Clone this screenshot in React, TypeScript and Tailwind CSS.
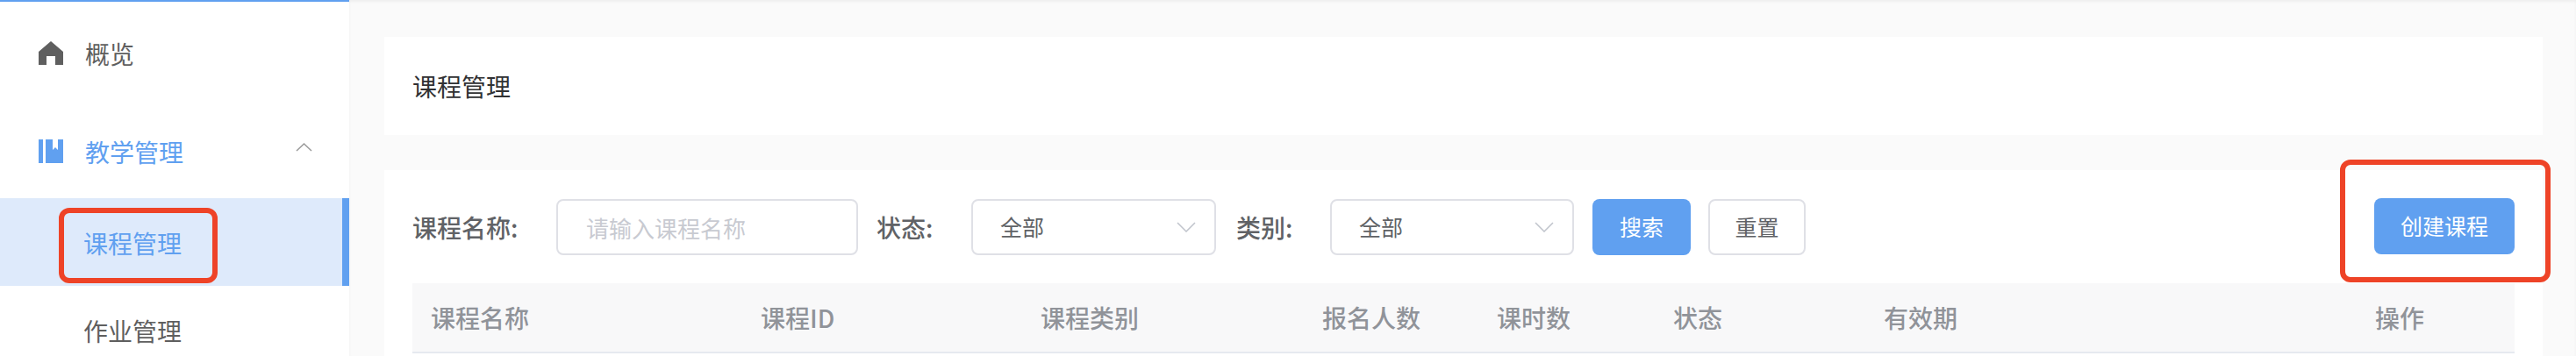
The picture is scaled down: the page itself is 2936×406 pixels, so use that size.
const font = { fontFamily: '"Noto Sans CJK SC", "Noto Sans", sans-serif' };

const columns = [
  ['课程名称', 'w-[376px]'],
  ['课程ID', 'w-[319px]'],
  ['课程类别', 'w-[321px]'],
  ['报名人数', 'w-[199px]'],
  ['课时数', 'w-[201px]'],
  ['状态', 'w-[240px]'],
  ['有效期', 'w-[560px]'],
  ['操作', 'flex-1'],
];

function HomeIcon() {
  return (
    <svg width="28" height="28" viewBox="0 0 28 28" className="shrink-0">
      <path d="M14 0 L28 12 V27 H19 V17 H9 V27 H0 V12 Z" fill="#5f5f5f" />
    </svg>
  );
}

function BookIcon() {
  return (
    <svg width="28" height="28" viewBox="0 0 28 28" className="shrink-0">
      <path d="M0 0 H5 V27 H0 Z M8 0 H16 V12 L19 9 L22 12 V0 H28 V27 H8 Z" fill="#60a0f0" />
    </svg>
  );
}

function Select({ className }: { className: string }) {
  return (
    <div className={`flex h-16 items-center justify-between rounded-lg border-2 border-[#dfe0e6] bg-white pl-[31px] pr-[21px] text-[25px] text-[#606266] ${className}`}>
      <span>全部</span>
      <svg width="22" height="12" viewBox="0 0 22 12" fill="none" stroke="#c0c4cc" strokeWidth="1.5">
        <path d="M1 1 L11 11 L21 1" />
      </svg>
    </div>
  );
}

export default function App() {
  return (
    <div style={font} className="flex h-[406px] w-[2936px] overflow-hidden bg-[#fafafa]">
      <aside className="relative w-[398px] shrink-0 border-t-2 border-[#60a0f0] bg-white text-[28px] text-[#5f5f5f]">
        <div className="flex h-[118px] items-center gap-[25px] pl-11">
          <HomeIcon />
          <span>概览</span>
        </div>
        <div className="flex h-[106px] items-center gap-[25px] pl-11 pr-[42px] text-[#60a0f0]">
          <BookIcon />
          <span>教学管理</span>
          <svg width="19" height="10" viewBox="0 0 19 10" fill="none" stroke="#9a9a9a" strokeWidth="1.5" className="ml-auto -mt-[11px]">
            <path d="M1 9 L9.5 1 L18 9" />
          </svg>
        </div>
        <div className="flex h-[100px] items-center border-r-8 border-[#60a0f0] bg-[#deeafb] pl-[95px] pt-[2px] text-[#60a0f0]">
          课程管理
        </div>
        <div className="flex h-[100px] items-center pl-[95px] pt-[2px]">作业管理</div>
        <div className="absolute left-[67px] top-[235px] h-[86px] w-[181px] rounded-[12px] border-[6px] border-[#ee4327]" />
      </aside>
      <main className="relative flex-1 pl-10 pr-[38px] pt-[42px] shadow-[inset_0_2px_3px_#eeeeee]">
        <section className="flex h-28 items-center bg-white px-8 text-[28px] text-[#303133]">课程管理</section>
        <section className="mt-10 h-[300px] bg-white px-8 pt-[33px]">
          <div className="flex h-16 items-center text-[25px] text-[#606266]">
            <label className="w-[164px] shrink-0 text-[28px] font-medium">课程名称:</label>
            <input
              placeholder="请输入课程名称"
              className="mr-[21px] h-16 w-[344px] shrink-0 rounded-lg border-2 border-[#dfe0e6] bg-white pl-[32px] text-[26px] outline-none placeholder:text-[#c8cad1]"
            />
            <label className="w-[108px] shrink-0 text-[28px] font-medium">状态:</label>
            <Select className="w-[279px] shrink-0" />
            <label className="ml-[23px] w-[107px] shrink-0 text-[28px] font-medium">类别:</label>
            <Select className="w-[278px] shrink-0" />
            <button className="ml-[21px] h-16 w-[112px] shrink-0 rounded-lg bg-[#60a0f0] text-white">搜索</button>
            <button className="ml-5 h-16 w-[111px] shrink-0 rounded-lg border-2 border-[#dfe0e6] bg-white">重置</button>
            <button className="ml-auto -mt-[2px] h-16 w-40 shrink-0 rounded-lg bg-[#60a0f0] text-white">创建课程</button>
          </div>
          <div className="mt-8 flex h-20 items-center border-b-2 border-[#e6e9f0] bg-[#f8f8f9] text-[28px] font-medium text-[#909399]">
            {columns.map(([title, width]) => (
              <div key={title} className={`pl-[21px] ${width}`}>{title}</div>
            ))}
          </div>
        </section>
        <div className="absolute left-[2269px] top-[182px] h-[140px] w-[240px] rounded-[12px] border-[6px] border-[#ee4327]" />
      </main>
    </div>
  );
}
